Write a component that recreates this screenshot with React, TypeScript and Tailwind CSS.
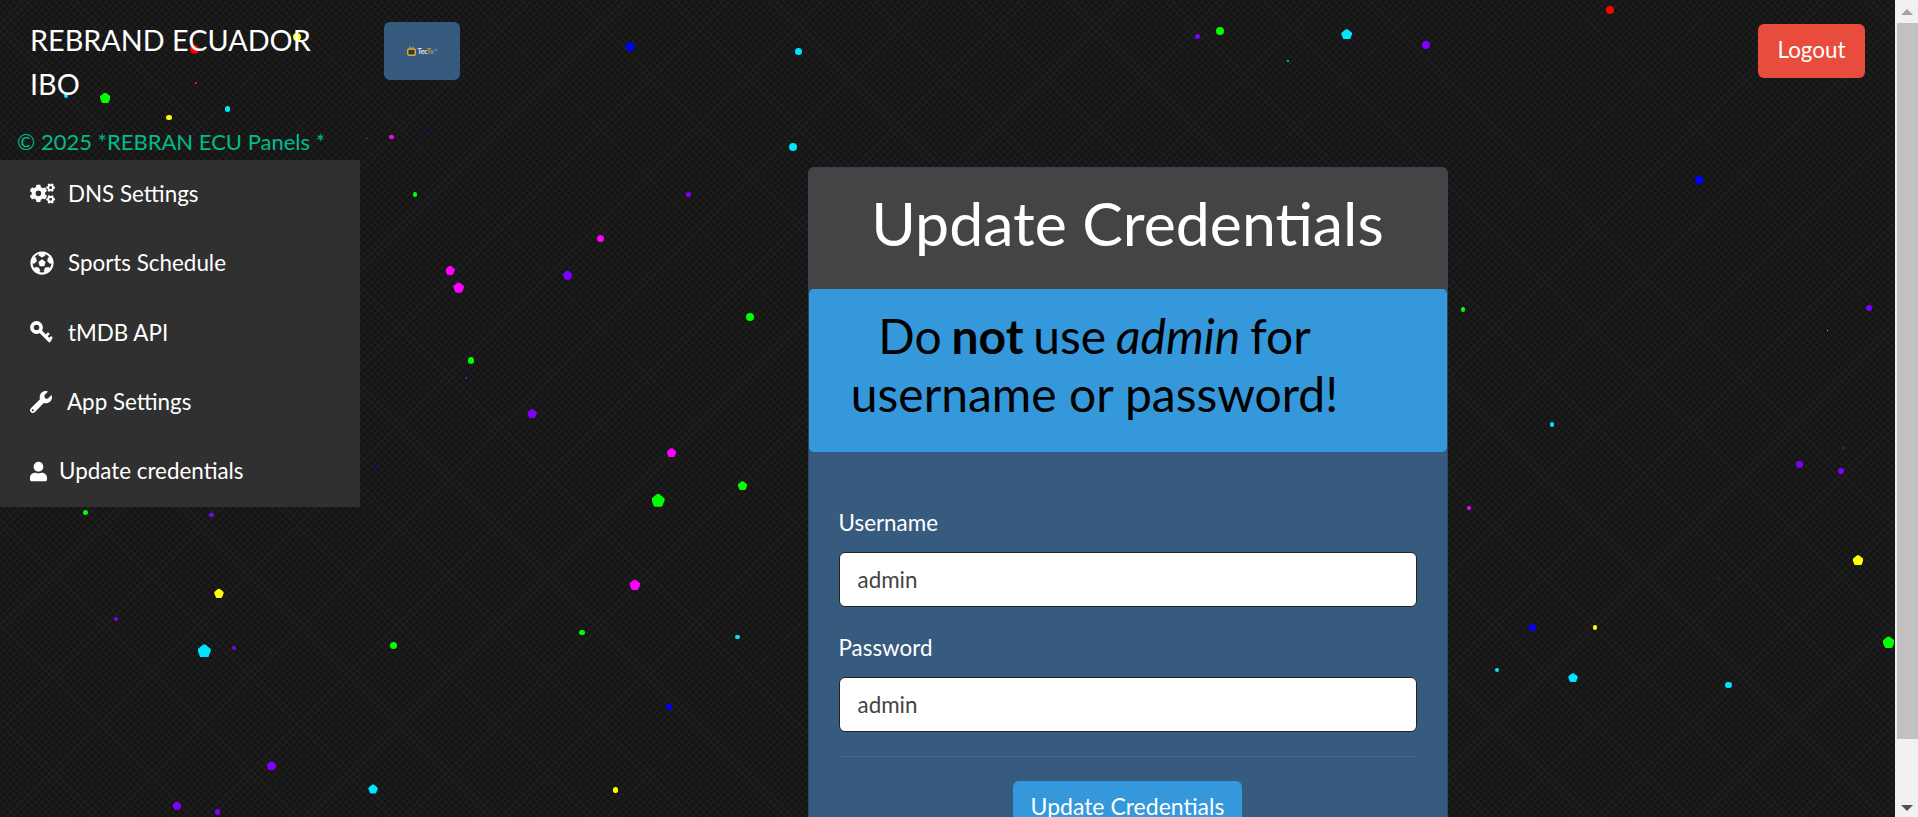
import { FaCogs, FaFutbol, FaUser, FaWrench } from "react-icons/fa";

const RED = "#ff0000";
const YEL = "#ffff00";
const GRN = "#00ff00";
const CYN = "#00e5ff";
const BLU = "#0000ff";
const PUR = "#8000ff";
const MAG = "#ff00ff";

// x, y in the 1568-wide picture, size in real px
const particles: [number, number, string, number][] = [
  [159, 40, RED, 7], [243, 30, YEL, 6], [86, 80, GRN, 8], [54, 78, CYN, 3], [138, 96, YEL, 4],
  [186, 89, CYN, 4], [160, 68, MAG, 2], [515, 38, BLU, 7], [653, 42, CYN, 5], [997, 25, GRN, 6],
  [979, 30, PUR, 4], [1101, 28, CYN, 8], [1166, 37, PUR, 6], [1316, 8, RED, 6], [1053, 50, GRN, 2],
  [320, 112, MAG, 3], [339, 159, GRN, 3], [300, 113, CYN, 1], [349, 106, BLU, 2], [648, 120, CYN, 6],
  [925, 122, RED, 1], [1028, 116, BLU, 1], [563, 159, PUR, 4], [1389, 147, BLU, 6], [491, 195, MAG, 5],
  [368, 221, MAG, 7], [375, 235, MAG, 8], [464, 225, PUR, 7], [613, 259, GRN, 6], [385, 295, GRN, 5],
  [381, 309, PUR, 2], [435, 338, PUR, 7], [549, 370, MAG, 7], [607, 397, GRN, 7], [538, 409, GRN, 10],
  [70, 419, GRN, 4], [173, 421, PUR, 3], [307, 383, BLU, 2], [1196, 253, GRN, 3], [1528, 252, PUR, 4],
  [1494, 270, YEL, 1], [1269, 347, CYN, 3], [1441, 352, RED, 1], [1507, 366, PUR, 2], [1471, 380, PUR, 5],
  [1505, 385, PUR, 4], [1201, 415, MAG, 3], [1519, 458, YEL, 8], [1405, 473, MAG, 1], [179, 485, YEL, 7],
  [95, 506, PUR, 3], [519, 478, MAG, 8], [476, 517, GRN, 4], [603, 521, CYN, 3], [1253, 513, BLU, 5],
  [1304, 513, YEL, 3], [1544, 525, GRN, 9], [1224, 548, CYN, 3], [1286, 554, CYN, 7], [1413, 560, CYN, 5],
  [167, 532, CYN, 10], [191, 530, PUR, 3], [322, 528, GRN, 5], [222, 534, PUR, 1], [547, 578, BLU, 5],
  [359, 578, BLU, 1], [222, 626, PUR, 7], [305, 645, CYN, 7], [503, 646, YEL, 4], [145, 659, PUR, 6],
  [178, 664, PUR, 4],
];

function KeyIcon() {
  return (
    <svg width="23" height="23" viewBox="0 0 23 23" fill="none" stroke="currentColor">
      <circle cx="6.5" cy="6.5" r="4.6" strokeWidth="3.6" />
      <path d="M10 10L20.5 20.5" strokeWidth="3.4" />
      <path d="M15.5 15.5l3.4-3.4M19 19l3-3" strokeWidth="2.6" />
    </svg>
  );
}

const navItems = [
  { label: "DNS Settings", icon: <FaCogs className="h-[25px] w-[25px]" />, gap: "ml-[13px]" },
  { label: "Sports Schedule", icon: <FaFutbol className="h-[24px] w-[24px]" />, gap: "ml-[14px]" },
  { label: "tMDB API", icon: <KeyIcon />, gap: "ml-[15px]" },
  { label: "App Settings", icon: <FaWrench className="h-[22px] w-[22px]" />, gap: "ml-[15px]" },
  { label: "Update credentials", icon: <FaUser className="h-[21px] w-[17px]" />, gap: "ml-[12px]" },
];

function Particles() {
  return (
    <div className="absolute inset-0">
      {particles.map(([x, y, color, size], i) => {
        const drawn = size < 3 ? size : size * 1.25 + 0.5;
        return (
          <div
            key={i}
            className={
              size >= 7
                ? "absolute [clip-path:polygon(42%_2%,58%_2%,100%_36%,100%_50%,84%_92%,74%_100%,26%_100%,16%_92%,0_50%,0_36%)]"
                : "absolute rounded-full"
            }
            style={{
              left: x * 1.2232 - drawn / 2,
              top: y * 1.2232 - drawn / 2,
              width: drawn,
              height: drawn,
              backgroundColor: color,
            }}
          />
        );
      })}
    </div>
  );
}

function Logo() {
  return (
    <div className="flex h-[58px] w-[76px] shrink-0 items-center justify-center rounded-[6px] bg-[#375a7f]">
      <svg width="9" height="10" viewBox="0 0 9 10">
        <path d="M2.5 0.5L4 2.5M6.5 0.5L5 2.5" fill="none" stroke="#e0b02c" strokeWidth="1" />
        <rect x="0.7" y="3" width="7.6" height="6.3" rx="1.5" fill="#2f3a40" stroke="#e0b02c" strokeWidth="1.4" />
      </svg>
      <span className="ml-[1px] text-[7px] leading-none font-bold tracking-[-0.2px] text-[#e8e8e8]">
        Tec<span className="text-[#c99a25]">Tv</span>
      </span>
      <span className="mb-[3px] ml-[1px] h-[2px] w-[2px] bg-[#3498db]" />
    </div>
  );
}

function Field({ label, className }: { label: string; className: string }) {
  return (
    <div className={className}>
      <label className="block h-[33px] text-[22.4px] leading-[33px] text-white">{label}</label>
      <input
        defaultValue="admin"
        className="mt-[13px] block h-[55px] w-full rounded-[6px] border border-[#222] bg-white px-[18px] text-[22.4px] text-[#444] outline-none"
      />
    </div>
  );
}

export default function App() {
  return (
    <div className="flex h-[817px] w-full overflow-hidden font-['Lato','Open_Sans',sans-serif]">
      <div className="relative min-w-0 flex-1 bg-[#151515] bg-[image:repeating-linear-gradient(45deg,rgba(255,255,255,0.028)_0px,rgba(255,255,255,0.028)_1.5px,transparent_1.5px,transparent_5px),repeating-linear-gradient(-45deg,rgba(255,255,255,0.028)_0px,rgba(255,255,255,0.028)_1.5px,transparent_1.5px,transparent_5px)]">
        <Particles />
        <div className="relative flex flex-col">
          <header className="flex h-[127px] items-start">
            <h1 className="mt-[18px] ml-[30px] w-[310px] shrink-0 text-[28.8px] leading-[44px] font-normal text-white">
              REBRAND ECUADOR IBO
            </h1>
            <div className="mt-[22px] ml-[44px]">
              <Logo />
            </div>
            <button className="mt-[24px] mr-[30px] ml-auto h-[54px] w-[107px] rounded-[6px] bg-[#e74c3c] pb-[3px] text-[22.4px] text-white">
              Logout
            </button>
          </header>
          <p className="h-[33px] pl-[17px] text-[22px] leading-[30px] text-[#00bc8c]">
            © 2025 *REBRAN ECU Panels *
          </p>
          <div className="flex items-start">
            <nav className="grid h-[347px] w-[360px] shrink-0 grid-rows-5 bg-[#303030]">
              {navItems.map((item) => (
                <a key={item.label} className="flex items-center pb-[2px] pl-[30px] text-[22.4px] text-white">
                  {item.icon}
                  <span className={item.gap}>{item.label}</span>
                </a>
              ))}
            </nav>
            <div className="flex min-w-0 flex-1 justify-center">
              <section className="mt-[7px] w-[640px] rounded-[6px] border border-[#2c4560] bg-[#375a7f]">
                <div className="h-[121px] rounded-t-[5px] bg-[#444] text-center">
                  <h2 className="pt-[19px] text-[60.8px] leading-[72px] font-normal text-white">Update Credentials</h2>
                </div>
                <div className="rounded-[5px] bg-[#3498db] pt-[18px] pr-[86px] pb-[29px] pl-[20px] text-center text-[48px] leading-[58px] text-black">
                  <span className="[word-spacing:-2.5px]">
                    Do <strong className="font-bold">not</strong> use <em>admin</em> for
                  </span>{" "}
                  username or password!
                </div>
                <form className="px-[30px] pt-[54px]">
                  <Field label="Username" className="" />
                  <Field label="Password" className="mt-[24px]" />
                  <hr className="mt-[24px] border-t border-[#466a8f]" />
                  <div className="mt-[24px] flex justify-center">
                    <button
                      type="button"
                      className="h-[54px] w-[229px] rounded-[6px] bg-[#3498db] pb-[3px] text-[23px] text-white"
                    >
                      Update Credentials
                    </button>
                  </div>
                </form>
              </section>
            </div>
          </div>
        </div>
      </div>
      <aside className="flex h-full w-[23px] shrink-0 flex-col bg-[#f1f1f1]">
        <div className="flex h-[23px] items-center justify-center">
          <div className="h-0 w-0 border-x-[6px] border-b-[6px] border-x-transparent border-b-[#a3a3a3]" />
        </div>
        <div className="ml-[2px] h-[716px] bg-[#c1c1c1]" />
        <div className="mt-auto flex h-[16px] items-center justify-center pb-[3px]">
          <div className="h-0 w-0 border-x-[6px] border-t-[6px] border-x-transparent border-t-[#505050]" />
        </div>
      </aside>
    </div>
  );
}
